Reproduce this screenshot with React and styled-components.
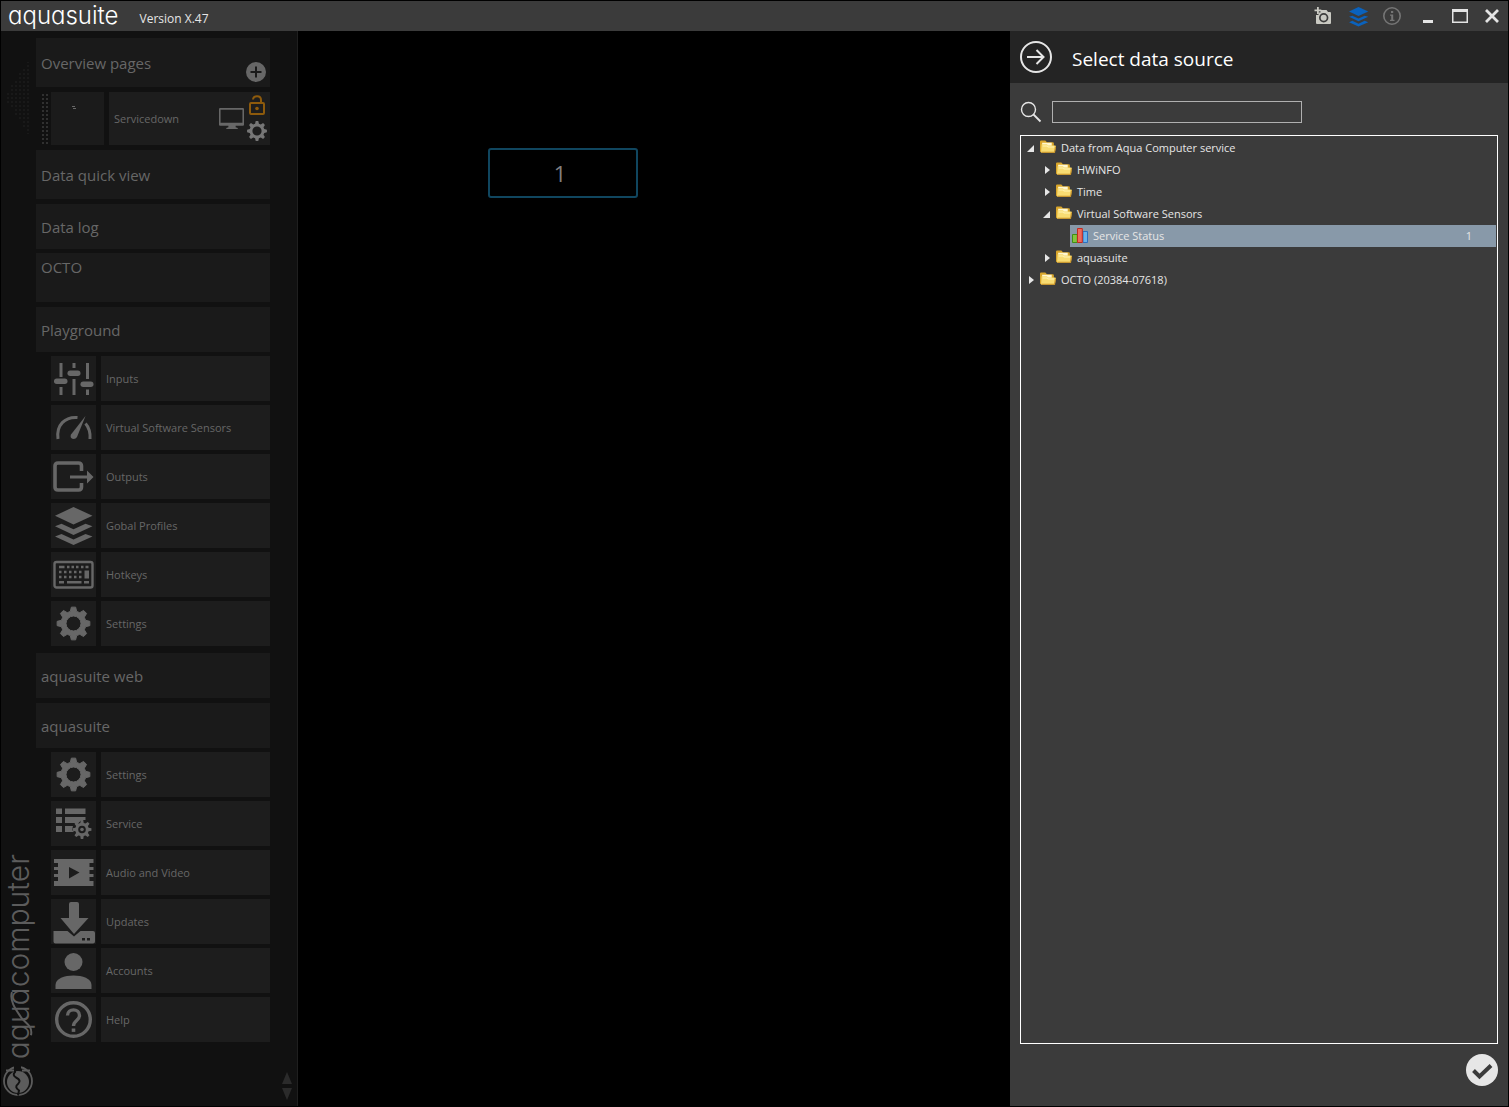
import React, { useState } from "react";
import styled, { createGlobalStyle, css } from "styled-components";

const GlobalStyle = createGlobalStyle`
  * { box-sizing: border-box; }
  body { margin: 0; background: #000; }
  button, input { font: inherit; color: inherit; }
  ul { list-style: none; margin: 0; padding: 0; }
`;

const Window = styled.div`
  display: flex;
  flex-direction: column;
  min-height: 100vh;
  padding: 1px;
  background: #000;
  color: #e6e6e6;
  font-family: "Open Sans", "Noto Sans", sans-serif;
  font-size: 11px;
`;

const plainButton = css`
  display: flex;
  align-items: center;
  justify-content: center;
  padding: 0;
  border: 0;
  background: none;
`;

/* Title bar */
const TitleBar = styled.header`
  display: flex;
  height: 30px;
  padding-left: 7px;
  background: #3b3b3b;
`;

const Brand = styled.span`
  font-family: Inter, sans-serif;
  font-feature-settings: "cv11";
  font-size: 24px;
  font-weight: 300;
  line-height: 30px;
  color: #fff;
`;

const Version = styled.span`
  flex: 1;
  margin-left: 21px;
  font-size: 12px;
  line-height: 36px;
`;

const TitleButton = styled.button`
  ${plainButton}
  width: ${(p) => (p.$tool ? 34 : 32)}px;
  margin-right: ${(p) => (p.$last ? 3 : 0)}px;
  color: ${(p) => p.$color || "#e4e4e4"};
`;

/* Body */
const Body = styled.div`
  flex: 1;
  display: grid;
  grid-template-columns: 297px minmax(0, 1fr) 498px;
`;

const Sidebar = styled.aside`
  display: grid;
  grid-template-columns: 35px minmax(0, 1fr) 27px;
  background: #111;
  border-right: 1px solid #1f1f1f;
  color: #676767;
`;

const Rail = styled.div`
  display: flex;
  flex-direction: column;
  align-items: center;
  justify-content: space-between;
  padding: 31px 2px 9px 0;
`;

const Maker = styled.div`
  display: flex;
  flex-direction: column;
  align-items: center;
  gap: 6px;
  color: #5c5c5c;
`;

const MakerWord = styled.div`
  position: relative;
  line-height: 34px;
  font-family: Inter, sans-serif;
  font-feature-settings: "cv11";
  font-size: 30px;
  font-weight: 300;
  writing-mode: vertical-rl;
  transform: rotate(180deg);
`;

const Menu = styled.nav`
  display: flex;
  flex-direction: column;
  gap: 5px;
  padding-top: 7px;
`;

const Section = styled.div`
  display: flex;
  align-items: ${(p) => (p.$top ? "flex-start" : "center")};
  height: ${(p) => (p.$tall ? 49 : 45)}px;
  padding-left: 5px;
  background: #1a1a1a;
  font-size: 15px;
`;

const SectionButton = styled.button`
  ${plainButton}
  flex: 1;
  justify-content: flex-start;
  line-height: 28px;
`;

const AddButton = styled.button`
  ${plainButton}
  align-self: flex-end;
  width: 28px;
  height: 30px;
`;

const PageRow = styled.div`
  display: grid;
  grid-template-columns: 8px 55px minmax(0, 1fr);
  height: 53px;
  padding-left: 5px;
`;

const Grip = styled.div`
  width: 7px;
  margin-top: 1px;
  background: radial-gradient(circle, #303030 1px, transparent 1px) 0 0 / 4px 4px;
`;

const Thumb = styled.div`
  margin-left: 2px;
  padding: 10px 0 0 18px;
  background: #1b1b1b;
  line-height: 0;
`;

const PageTile = styled.div`
  display: flex;
  margin-left: 5px;
  background: #1d1d1d;
`;

const PageButton = styled.button`
  ${plainButton}
  flex: 1;
  justify-content: space-between;
  padding-left: 5px;
`;

const PageTools = styled.div`
  display: flex;
  flex-direction: column;
  gap: 5px;
  padding-top: 2px;
`;

const PageTool = styled.button`
  ${plainButton}
  width: 26px;
  height: 21px;
  color: ${(p) => p.$color || "#767676"};
`;

const Group = styled.div`
  display: flex;
  flex-direction: column;
  gap: 4px;
`;

const Entries = styled.ul`
  display: flex;
  flex-direction: column;
  gap: 4px;
  padding: 0 0 2px 15px;
`;

const Entry = styled.button`
  ${plainButton}
  width: 100%;
  height: 45px;
  align-items: stretch;
  justify-content: flex-start;
  gap: 5px;
`;

const EntryIcon = styled.span`
  width: 45px;
  background: #1c1c1c;
  line-height: 0;
`;

const EntryLabel = styled.span`
  flex: 1;
  padding-left: 5px;
  background: #1d1d1d;
  line-height: 45px;
  text-align: left;
`;

const ScrollStrip = styled.div`
  display: flex;
  flex-direction: column;
  align-items: center;
  justify-content: flex-end;
  gap: 2px;
  padding: 0 0 5px 6px;
  color: #2b2b2b;
`;

const ScrollButton = styled.button`
  ${plainButton}
  width: 12px;
  height: 14px;
`;

const Canvas = styled.main`
  position: relative;
  background: #000;
`;

const Widget = styled.div`
  position: absolute;
  left: 190px;
  top: 117px;
  width: 150px;
  height: 50px;
  padding-right: 6px;
  border: 2px solid #10465f;
  border-radius: 3px;
  color: #808080;
  font-size: 22px;
  line-height: 46px;
  text-align: center;
`;

/* Data source panel */
const Panel = styled.section`
  display: flex;
  flex-direction: column;
  background: #3b3b3b;
`;

const PanelHeader = styled.div`
  display: flex;
  align-items: center;
  gap: 20px;
  height: 52px;
  padding-left: 10px;
  background: #242424;
`;

const PanelTitle = styled.h1`
  margin: 4px 0 0;
  font-size: 19px;
  font-weight: 400;
  line-height: 28px;
  color: #fff;
`;

const RoundButton = styled.button`
  ${plainButton}
  width: 32px;
  height: 32px;
  align-self: ${(p) => (p.$end ? "flex-end" : "center")};
`;

const SearchRow = styled.label`
  display: flex;
  align-items: center;
  gap: 10px;
  padding: 18px 10px 12px;
`;

const SearchBox = styled.input`
  width: 250px;
  height: 22px;
  padding: 0 4px;
  border: 1px solid #b0b0b0;
  border-radius: 0;
  background: #3b3b3b;
  outline: 0;
`;

const TreeBox = styled.div`
  flex: 1;
  margin: 0 10px;
  padding: 1px 1px 1px 0;
  border: 1px solid #fff;
`;

const TreeLine = styled.div`
  display: flex;
  height: 22px;
  padding-left: ${(p) => p.$level * 16}px;
`;

const Expander = styled.button`
  ${plainButton}
  width: 17px;
  padding-left: 2px;
`;

const ExpanderGap = styled.span`
  width: 17px;
`;

const NodeButton = styled.button`
  ${plainButton}
  flex: 1;
  justify-content: flex-start;
  gap: 5px;
  padding: 0 24px 2px 2px;
  background: ${(p) => (p.$selected ? "#8899a9" : "none")};
`;

const NodeValue = styled.span`
  margin-left: auto;
`;

const PanelFooter = styled.div`
  display: flex;
  flex-direction: column;
  padding: 10px 10px 20px;
`;

/* Drawings */
const Svg = ({ w, h = w, box, children, ...rest }) => (
  <svg width={w} height={h} viewBox={box || `0 0 ${w} ${h}`} fill="currentColor" aria-hidden="true" {...rest}>
    {children}
  </svg>
);

const gearPath = (cx, cy, outer, inner, hole, teeth = 8) => {
  const points = [];
  for (let i = 0; i < teeth; i += 1) {
    const a = (i / teeth) * Math.PI * 2;
    [[-0.3, inner], [-0.15, outer], [0.15, outer], [0.3, inner]].forEach(([d, r]) => {
      const t = a + d * ((Math.PI * 2) / teeth) * 1.1;
      points.push(`${(cx + r * Math.sin(t)).toFixed(2)} ${(cy - r * Math.cos(t)).toFixed(2)}`);
    });
  }
  return `M${points.join("L")}ZM${cx - hole} ${cy}a${hole} ${hole} 0 1 0 ${hole * 2} 0a${hole} ${hole} 0 1 0 ${-hole * 2} 0Z`;
};

const entryDrawings = {
  inputs: (
    <>
      <path d="M8.500 7h3v14h-3zM8.500 31h3v8h-3zM21.500 7h3v5h-3zM21.500 23h3v16h-3zM35 7h3v16h-3zM35 33.500h3V39h-3z" />
      <rect x="3" y="22.500" width="13.500" height="5.500" rx="2.700" />
      <rect x="16.500" y="14.500" width="13" height="5.500" rx="2.700" />
      <rect x="29.500" y="25.500" width="13" height="5.500" rx="2.700" />
    </>
  ),
  sensors: (
    <>
      <path d="M7 34C5 20 14 11.500 26.500 12.500" fill="none" stroke="currentColor" strokeWidth="3" />
      <path d="M34.500 18.500C38 22.500 39.500 27.500 39 34" fill="none" stroke="currentColor" strokeWidth="3" />
      <path d="M34.500 11L26 32c-2 3.500-8 2-6-2.500z" />
    </>
  ),
  outputs: (
    <>
      <path d="M30.500 17V12q0-3-3-3H7q-3 0-3 3v21q0 3 3 3h20.500q3 0 3-3v-4" fill="none" stroke="currentColor" strokeWidth="3.600" />
      <path d="M19 21.500h17v-5l6.500 6.500-6.500 6.500v-5H19z" />
    </>
  ),
  layers: (
    <>
      <path d="M22.500 4L41.500 12.800 22.500 21.500 4 12.800z" />
      <path d="M4 23.200l6.500-2.400 12 5.500 12-5.500 7 2.400L22.500 32z" />
      <path d="M4 33.500l6.500-2.500 12 5.500 12-5.500 7 2.500L22.500 42z" />
    </>
  ),
  keyboard: (
    <>
      <rect x="3.500" y="10" width="38" height="25.500" rx="2" fill="none" stroke="currentColor" strokeWidth="2.400" />
      <path d="M8 15h5.500M16 15h2.500M20.500 15h2.500M25 15h2.500M30 15h2.500M34.500 15h3M8 20h2.500M13 20h2.500M18 20h2.500M23 20h2.500M28 20h2.500M8 25h2.500M13 25h2.500M18 25h2.500M23 25h2.500M28 25h2.500M8 30.300h5M16 30.300h14.500M33 30.300h5" fill="none" stroke="currentColor" strokeWidth="2.400" />
      <path d="M33.500 18.500h4.500v8h-4.500z" />
    </>
  ),
  gear: <path fillRule="evenodd" stroke="currentColor" strokeLinejoin="round" d={gearPath(22.5, 22.5, 16.5, 12.5, 7.5)} />,
  service: (
    <>
      <path d="M5 7.500h6v5.500H5zM5 16h6v6H5zM5 25h6v6H5zM14 7.500h20.500v5.500H14zM14 16h20.500v3l-4 0-3 3H14zM14 25h8l-1 4 2 2h-9z" />
      <path fillRule="evenodd" d={gearPath(31, 28.5, 9.5, 6.8, 3.8)} />
      <circle cx="31" cy="28.500" r="1.800" />
    </>
  ),
  video: (
    <path
      fillRule="evenodd"
      d="M3 9h39.500v4h-4v4h4v3h-4v4h4v3h-4v4h4v5H3v-5h4v-4H3v-3h4v-4H3v-3h4v-4H3zM18 17v11.500l10.500-6z"
    />
  ),
  update: (
    <>
      <path d="M18 5q0-2 2-2h6q2 0 2 2v14h9.500L23 35 9.500 19H18z" />
      <path fillRule="evenodd" d="M2.500 32h14l6.500 5.500L29.500 32H42q2 0 2 2v8.500q0 2-2 2H4.500q-2 0-2-2zM31 39v2.500h3V39zM36 39v2.500h3V39z" />
    </>
  ),
  account: (
    <>
      <circle cx="22.500" cy="14" r="9" />
      <path d="M4.500 41v-4c0-6.500 9-9.500 18-9.500s18 3 18 9.500v4z" />
    </>
  ),
  help: (
    <>
      <circle cx="22.500" cy="22.500" r="16.800" fill="none" stroke="currentColor" strokeWidth="3.400" />
      <path d="M16.500 18.500c0-7.500 12-7.500 12 0 0 5-6 5-6 10.500" fill="none" stroke="currentColor" strokeWidth="3.400" />
      <path d="M20.700 31.500h3.600v3.400h-3.600z" />
    </>
  ),
};

const CameraIcon = () => (
  <Svg w={20} box="2 0 20 20">
    <path d="M5 1v2.500H2.500v1.800H5V8h1.800V5.300H9.300V3.500H6.800V1z" />
    <path fillRule="evenodd" d="M8.500 4h6l1.500 2H18q1 0 1 1v10q0 1-1 1H5q-1 0-1-1V9h2.500V6.500h2zM7 11.700a4.700 4.700 0 1 0 9.400 0a4.700 4.700 0 1 0-9.400 0zM8.700 11.700a3 3 0 1 0 6 0a3 3 0 1 0-6 0z" />
  </Svg>
);

const LayersIcon = () => (
  <Svg w={21} box="2 2 41 41">{entryDrawings.layers}</Svg>
);

const InfoIcon = () => (
  <Svg w={20}>
    <circle cx="10" cy="10" r="8.200" fill="none" stroke="currentColor" strokeWidth="1.600" />
    <path d="M9 5h2.200v2H9zM8 8.500h3.200v5.200h1.300V15H8v-1.300h1.200V9.800H8z" />
  </Svg>
);

const MinimizeIcon = () => <Svg w={16}><path d="M3 12h10v3H3z" /></Svg>;
const MaximizeIcon = () => (
  <Svg w={16}><path fillRule="evenodd" d="M0 1h16v14H0zM1.500 4v9.500h13V4z" /></Svg>
);
const CloseIcon = () => (
  <Svg w={16}><path d="M2 2l12 12M14 2L2 14" stroke="currentColor" strokeWidth="2.800" /></Svg>
);

const PlusIcon = () => (
  <Svg w={20}>
    <path fillRule="evenodd" d="M0 10a10 10 0 1 0 20 0a10 10 0 1 0-20 0zM9 4.500h2V9h4.500v2H11v4.500H9V11H4.500V9H9z" />
  </Svg>
);

const MonitorIcon = () => (
  <Svg w={25} h={21} box="0 0 24 20">
    <path fillRule="evenodd" d="M1 0h22q1 0 1 1v15q0 1-1 1h-7v1.500l2 .5v1H7v-1l2-.500V17H1q-1 0-1-1V1q0-1 1-1zM1.500 1.500v12.500h21V1.500z" />
  </Svg>
);

const LockIcon = () => (
  <Svg w={16} h={20}>
    <rect x="1" y="8" width="14" height="11" rx="1" fill="none" stroke="currentColor" strokeWidth="2" />
    <path d="M4 4.500C4.500 0 12 0 12 5v3" fill="none" stroke="currentColor" strokeWidth="2" />
    <circle cx="8" cy="13.500" r="1.800" />
  </Svg>
);

const SmallGearIcon = () => (
  <Svg w={20}><path fillRule="evenodd" d={gearPath(10, 10, 10, 7.5, 4.6)} /></Svg>
);

const CollapseHint = () => {
  const dots = [];
  for (let x = 0; x < 6; x += 1) {
    for (let y = -x * 1.6 - 1; y <= x * 1.6 + 1; y += 1) {
      dots.push(<rect key={`${x}/${y}`} x={1 + x * 4} y={Math.round(35 + Math.round(y) * 4)} width="2" height="2" />);
    }
  }
  return <Svg w={24} h={72} color="#191919">{dots}</Svg>;
};

const MakerFlourish = styled.svg`
  position: absolute;
  left: 0;
  top: 22px;
`;

const MakerMark = () => (
  <Svg w={32}>
    <circle cx="16" cy="16" r="14" fill="none" stroke="currentColor" strokeWidth="1.800" />
    <circle cx="16" cy="17" r="11" />
    <path d="M13 0v7q-3 3 1 5.500 6 3 2 6.500-4 3 1 6.500l-1 5" fill="none" stroke="#111" strokeWidth="2" />
    <path d="M4 5.500h8M20 5.500h8" stroke="currentColor" strokeWidth="2.200" />
    <path d="M14 0h5v5h-5z" fill="#111" />
  </Svg>
);

const FolderIcon = () => (
  <Svg w={16} box="1 1 15 15">
    <path d="M1 3.500q0-1 1-1h4l1.500 1.500H13q1 0 1 1v8.500H2q-1 0-1-1z" fill="#d9a62b" />
    <path d="M3 4.500h9v3H3z" fill="#fff7d0" />
    <path d="M2.500 6h5l1.200 1H15q1 0 1 .8l-1 5.400q0 .8-1 .8H3q-1 0-1-.8z" fill="#f8dc72" />
    <path d="M2.500 13.500h12.200l.8-5.500" fill="none" stroke="#c78f22" strokeWidth="1" />
    <path d="M3.500 7.500h4.200l1 1h5.500" fill="none" stroke="#fff3b4" strokeWidth="1" />
  </Svg>
);

const ChartIcon = () => (
  <Svg w={16}>
    <path d="M.5 7.500h4.800v8H.5z" fill="#86c440" stroke="#3f8f12" />
    <path d="M11 4.500h4.500v11H11z" fill="#69b2ea" stroke="#2c6fc0" />
    <path d="M5.500 1.500h4.800v14H5.500z" fill="#ee6a5c" stroke="#c22a1f" />
  </Svg>
);

const ArrowCircle = () => (
  <Svg w={32}>
    <circle cx="16" cy="16" r="15" fill="none" stroke="currentColor" strokeWidth="2" />
    <path d="M7 16h16M16.500 9l7 7-7 7" fill="none" stroke="currentColor" strokeWidth="2" />
  </Svg>
);

const SearchIcon = () => (
  <Svg w={22} fill="none" stroke="currentColor">
    <circle cx="8.500" cy="8.500" r="7" strokeWidth="1.400" fill="none" />
    <path d="M13.500 13.500l7 7" strokeWidth="1.800" />
  </Svg>
);

const CheckCircle = () => (
  <Svg w={32}>
    <circle cx="16" cy="16" r="16" />
    <path d="M7.500 16.500l6 6L25 11.500" fill="none" stroke="#3b3b3b" strokeWidth="4" />
  </Svg>
);

/* Content */
const playground = [
  ["inputs", "Inputs"],
  ["sensors", "Virtual Software Sensors"],
  ["outputs", "Outputs"],
  ["layers", "Gobal Profiles"],
  ["keyboard", "Hotkeys"],
  ["gear", "Settings"],
];

const application = [
  ["gear", "Settings"],
  ["service", "Service"],
  ["video", "Audio and Video"],
  ["update", "Updates"],
  ["account", "Accounts"],
  ["help", "Help"],
];

const sources = [
  {
    label: "Data from Aqua Computer service",
    open: true,
    children: [
      { label: "HWiNFO" },
      { label: "Time" },
      { label: "Virtual Software Sensors", open: true, children: [{ label: "Service Status", value: "1" }] },
      { label: "aquasuite" },
    ],
  },
  { label: "OCTO (20384-07618)" },
];

const MenuSection = ({ label, children, ...shape }) => (
  <Section {...shape}>
    <SectionButton type="button">{label}</SectionButton>
    {children}
  </Section>
);

const MenuEntries = ({ items }) => (
  <Entries>
    {items.map(([icon, label]) => (
      <li key={label}>
        <Entry type="button">
          <EntryIcon>
            <Svg w={45}>{entryDrawings[icon]}</Svg>
          </EntryIcon>
          <EntryLabel>{label}</EntryLabel>
        </Entry>
      </li>
    ))}
  </Entries>
);

function TreeNode({ node, level }) {
  const [open, setOpen] = useState(Boolean(node.open));
  const leaf = node.value !== undefined;
  return (
    <li role="treeitem" aria-expanded={leaf ? undefined : open} aria-selected={leaf}>
      <TreeLine $level={level}>
        {leaf ? (
          <ExpanderGap />
        ) : (
          <Expander type="button" aria-label={`Toggle ${node.label}`} onClick={() => setOpen(!open)}>
            <Svg w={10}>{open ? <path d="M8 2v7H1z" /> : <path d="M3 1l5 4-5 4z" />}</Svg>
          </Expander>
        )}
        <NodeButton type="button" $selected={leaf}>
          {leaf ? <ChartIcon /> : <FolderIcon />}
          <span>{node.label}</span>
          {leaf && <NodeValue>{node.value}</NodeValue>}
        </NodeButton>
      </TreeLine>
      {open && node.children && (
        <ul role="group">
          {node.children.map((child) => (
            <TreeNode key={child.label} node={child} level={level + 1} />
          ))}
        </ul>
      )}
    </li>
  );
}

export default function App() {
  return (
    <>
      <GlobalStyle />
      <Window>
        <TitleBar>
          <Brand>aquasuite</Brand>
          <Version>Version X.47</Version>
          <TitleButton type="button" $tool $color="#c9c9c2" aria-label="Screenshot"><CameraIcon /></TitleButton>
          <TitleButton type="button" $tool $color="#0a62bd" aria-label="Profiles"><LayersIcon /></TitleButton>
          <TitleButton type="button" $tool $last $color="#757575" aria-label="Information"><InfoIcon /></TitleButton>
          <TitleButton type="button" aria-label="Minimize"><MinimizeIcon /></TitleButton>
          <TitleButton type="button" aria-label="Maximize"><MaximizeIcon /></TitleButton>
          <TitleButton type="button" aria-label="Close"><CloseIcon /></TitleButton>
        </TitleBar>
        <Body>
          <Sidebar>
            <Rail>
              <CollapseHint />
              <Maker>
                <MakerWord>
                  aquacomputer
                  <MakerFlourish width="32" height="46" fill="none" stroke="currentColor" strokeWidth="2" aria-hidden="true">
                    <path d="M4 2C2 12 10 14 14 20S26 36 23 45" />
                  </MakerFlourish>
                </MakerWord>
                <MakerMark />
              </Maker>
            </Rail>
            <Menu>
              <MenuSection label="Overview pages" $tall>
                <AddButton type="button" aria-label="Add page"><PlusIcon /></AddButton>
              </MenuSection>
              <PageRow>
                <Grip />
                <Thumb>
                  <Svg w={8}><path d="M3 4h3v1H3zM4 6h3v1H4z" /></Svg>
                </Thumb>
                <PageTile>
                  <PageButton type="button">
                    <span>Servicedown</span>
                    <MonitorIcon />
                  </PageButton>
                  <PageTools>
                    <PageTool type="button" $color="#8d5a0c" aria-label="Unlock"><LockIcon /></PageTool>
                    <PageTool type="button" aria-label="Page settings"><SmallGearIcon /></PageTool>
                  </PageTools>
                </PageTile>
              </PageRow>
              <MenuSection label="Data quick view" $tall />
              <Group>
                <MenuSection label="Data log" />
                <MenuSection label="OCTO" $tall $top />
              </Group>
              <Group>
                <MenuSection label="Playground" />
                <MenuEntries items={playground} />
              </Group>
              <MenuSection label="aquasuite web" />
              <Group>
                <MenuSection label="aquasuite" />
                <MenuEntries items={application} />
              </Group>
            </Menu>
            <ScrollStrip>
              <ScrollButton type="button" aria-label="Scroll up"><Svg w={10} h={12}><path d="M5 0l5 12H0z" /></Svg></ScrollButton>
              <ScrollButton type="button" aria-label="Scroll down"><Svg w={10} h={12}><path d="M5 12L0 0h10z" /></Svg></ScrollButton>
            </ScrollStrip>
          </Sidebar>
          <Canvas>
            <Widget>1</Widget>
          </Canvas>
          <Panel>
            <PanelHeader>
              <RoundButton type="button" aria-label="Close panel"><ArrowCircle /></RoundButton>
              <PanelTitle>Select data source</PanelTitle>
            </PanelHeader>
            <SearchRow>
              <SearchIcon />
              <SearchBox type="text" aria-label="Search" />
            </SearchRow>
            <TreeBox>
              <ul role="tree" aria-label="Data sources">
                {sources.map((node) => (
                  <TreeNode key={node.label} node={node} level={0} />
                ))}
              </ul>
            </TreeBox>
            <PanelFooter>
              <RoundButton type="button" $end aria-label="Confirm"><CheckCircle /></RoundButton>
            </PanelFooter>
          </Panel>
        </Body>
      </Window>
    </>
  );
}
